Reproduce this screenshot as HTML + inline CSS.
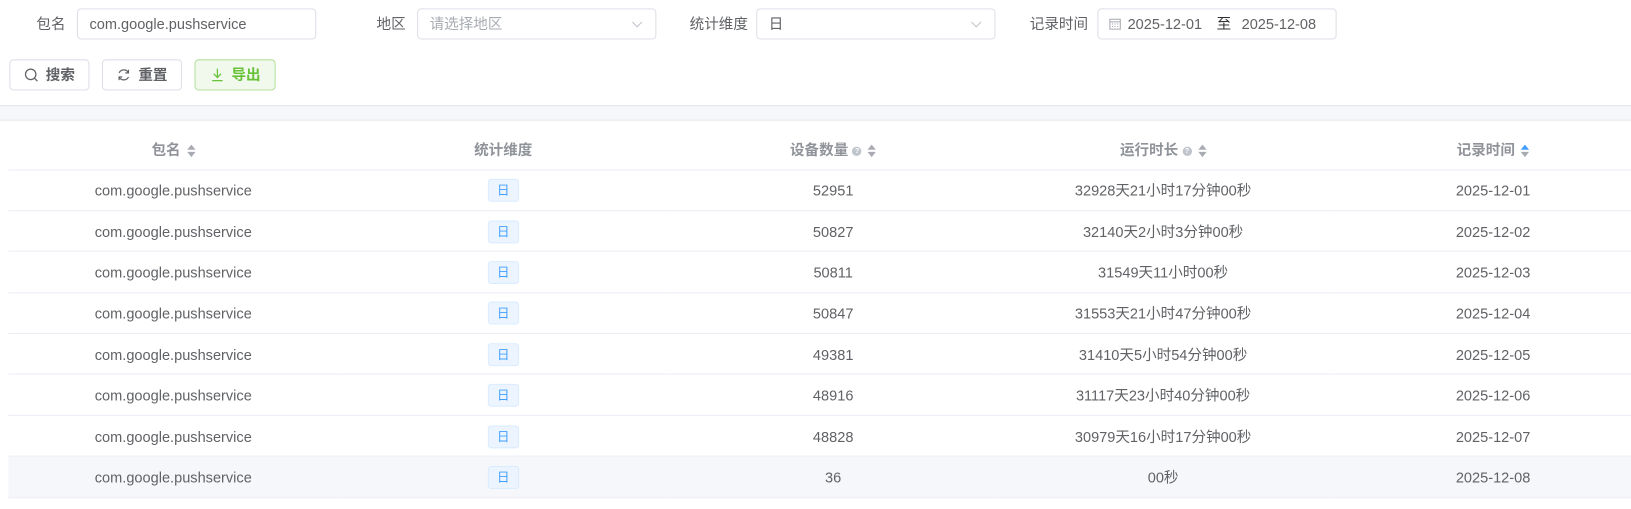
<!DOCTYPE html>
<html><head><meta charset="utf-8"><style>
*{box-sizing:border-box;margin:0;padding:0}
html,body{width:1631px;height:509px;overflow:hidden;background:#fff}
body{font-family:"Liberation Sans","Noto Sans CJK SC",sans-serif;font-size:14px;color:#606266;position:relative}
#w{position:absolute;left:0;top:0;width:1568px;height:490px;transform:scale(1.0402);transform-origin:0 0}
.lbl{position:absolute;top:8px;height:30px;line-height:30px;color:#606266;font-size:14px}
.inp{position:absolute;top:8px;height:30px;border:1px solid #dcdfe6;border-radius:4px;line-height:28px;padding-left:11px;font-size:14px;color:#606266}
.arr{position:absolute;right:14px;top:9px;width:7px;height:7px;border-right:1px solid #c0c4cc;border-bottom:1px solid #c0c4cc;transform:rotate(45deg)}
.btn{position:absolute;top:57px;height:30px;border:1px solid #dcdfe6;border-radius:4px;line-height:28px;font-size:14px;font-weight:bold;color:#606266;display:flex;align-items:center;justify-content:center;gap:7px}
.band{position:absolute;left:0;top:101px;width:1568px;height:15px;background:#f5f7fa;border-top:1px solid #e4e7ed;border-bottom:1px solid #e4e7ed}
table{position:absolute;left:8px;top:116px;width:1586px;border-collapse:collapse;table-layout:fixed}
td,th{text-align:center;border-bottom:1px solid #ebeef5;font-size:14px}
th{height:47px;padding-top:9px;color:#909399;font-weight:bold}
td{height:39.4px;color:#606266;padding-top:1px}
tr.h td{background:#f5f7fa}
.tag{display:inline-block;width:30px;height:22px;line-height:20px;background:#ecf5ff;border:1px solid #d9ecff;border-radius:3px;color:#409eff;font-size:12px}
.sort{display:inline-block;vertical-align:middle;margin-left:6px;width:8px;height:12px;position:relative}
.sort:before{content:"";position:absolute;left:0;top:0;border:4px solid transparent;border-bottom:5px solid #a8abb2;border-top:0}
.sort:after{content:"";position:absolute;left:0;bottom:0;border:4px solid transparent;border-top:5px solid #a8abb2;border-bottom:0}
.sort.up:before{border-bottom-color:#409eff}
.q{display:inline-block;vertical-align:middle;width:9px;height:9px;border-radius:50%;background:#c0c4cc;color:#fff;font-size:7px;line-height:9px;margin-left:4px}
</style></head><body><div id="w">
<div class="lbl" style="left:35px">包名</div>
<div class="inp" style="left:74px;width:230px">com.google.pushservice</div>
<div class="lbl" style="left:362px">地区</div>
<div class="inp" style="left:401px;width:230px;color:#a8abb2">请选择地区<span class="arr"></span></div>
<div class="lbl" style="left:663px">统计维度</div>
<div class="inp" style="left:727px;width:230px">日<span class="arr"></span></div>
<div class="lbl" style="left:990px">记录时间</div>
<div class="inp" style="left:1055px;width:230px;padding-left:10px;display:flex;align-items:center">
<svg width="12" height="12" viewBox="0 0 12 12" style="margin-right:6px"><rect x="1" y="1.5" width="10" height="9.5" fill="none" stroke="#a8abb2"/><line x1="1" y1="4" x2="11" y2="4" stroke="#a8abb2"/><path d="M3 6h1M5.5 6h1M8 6h1M3 8.5h1M5.5 8.5h1M8 8.5h1" stroke="#a8abb2"/></svg>
<span>2025-12-01</span><span style="margin:0 10px 0 14px;color:#303133">至</span><span>2025-12-08</span></div>
<div class="btn" style="left:9px;width:77px"><svg width="14" height="14" viewBox="0 0 14 14"><circle cx="6.5" cy="6.5" r="5" fill="none" stroke="#606266" stroke-width="1.2"/><line x1="10" y1="10" x2="13" y2="13" stroke="#606266" stroke-width="1.2"/></svg>搜索</div>
<div class="btn" style="left:98px;width:77px"><svg width="14" height="14" viewBox="0 0 14 14"><path d="M11.5 5A5 5 0 0 0 2.5 5M2.5 9A5 5 0 0 0 11.5 9" fill="none" stroke="#606266" stroke-width="1.2"/><path d="M11.5 2v3h-3M2.5 12V9h3" fill="none" stroke="#606266" stroke-width="1.2"/></svg>重置</div>
<div class="btn" style="left:187px;width:78px;background:#f0f9eb;border-color:#b3e19d;color:#67c23a"><svg width="14" height="14" viewBox="0 0 14 14"><path d="M7 1v8M3.5 6l3.5 3.5L10.5 6M2 12.5h10" fill="none" stroke="#67c23a" stroke-width="1.2"/></svg>导出</div>
<div class="band"></div>
<table>
<tr><th>包名<span class="sort"></span></th><th>统计维度</th><th>设备数量<span class="q">?</span><span class="sort"></span></th><th>运行时长<span class="q">?</span><span class="sort"></span></th><th>记录时间<span class="sort up"></span></th></tr>
<tr><td>com.google.pushservice</td><td><span class="tag">日</span></td><td>52951</td><td>32928天21小时17分钟00秒</td><td>2025-12-01</td></tr>
<tr><td>com.google.pushservice</td><td><span class="tag">日</span></td><td>50827</td><td>32140天2小时3分钟00秒</td><td>2025-12-02</td></tr>
<tr><td>com.google.pushservice</td><td><span class="tag">日</span></td><td>50811</td><td>31549天11小时00秒</td><td>2025-12-03</td></tr>
<tr><td>com.google.pushservice</td><td><span class="tag">日</span></td><td>50847</td><td>31553天21小时47分钟00秒</td><td>2025-12-04</td></tr>
<tr><td>com.google.pushservice</td><td><span class="tag">日</span></td><td>49381</td><td>31410天5小时54分钟00秒</td><td>2025-12-05</td></tr>
<tr><td>com.google.pushservice</td><td><span class="tag">日</span></td><td>48916</td><td>31117天23小时40分钟00秒</td><td>2025-12-06</td></tr>
<tr><td>com.google.pushservice</td><td><span class="tag">日</span></td><td>48828</td><td>30979天16小时17分钟00秒</td><td>2025-12-07</td></tr>
<tr class="h"><td>com.google.pushservice</td><td><span class="tag">日</span></td><td>36</td><td>00秒</td><td>2025-12-08</td></tr>
</table>
</div></body></html>
